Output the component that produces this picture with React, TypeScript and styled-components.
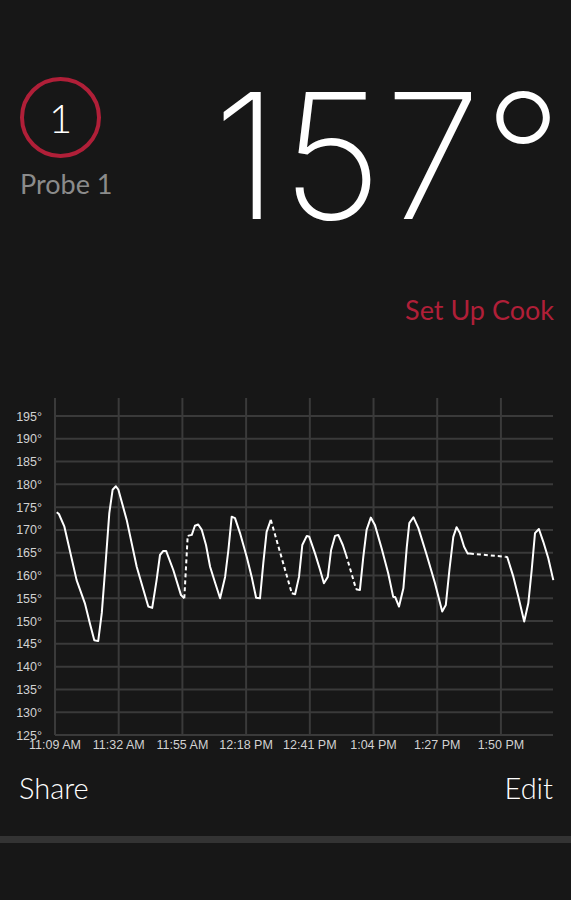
import React from 'react';
import styled, { createGlobalStyle } from 'styled-components';

const GlobalStyle = createGlobalStyle`
    html, body {
        margin: 0;
        padding: 0;
        background: #171717;
    }
`;

const Page = styled.div`
    width: 571px;
    height: 900px;
    background: #171717;
    display: flex;
    flex-direction: column;
    overflow: hidden;
    font-family: Lato, "Noto Sans", sans-serif;
`;

const Header = styled.div`
    display: flex;
    justify-content: space-between;
    align-items: flex-start;
    padding: 69px 6px 0 20px;
`;

const ProbeBlock = styled.div`
    display: flex;
    flex-direction: column;
    align-items: flex-start;
    padding-top: 8px;
`;

const ProbeRing = styled.div`
    box-sizing: border-box;
    width: 81px;
    height: 81px;
    border: 4px solid #b01f38;
    border-radius: 50%;
    display: flex;
    align-items: center;
    justify-content: center;
    color: #fff;
    font-size: 40px;
    font-weight: 300;
    line-height: 1;
`;

const ProbeName = styled.div`
    margin-top: 12px;
    color: #8b8b8b;
    font-size: 27px;
    line-height: 1;
    font-weight: 400;
`;

const BigTemp = styled.div`
    color: #fff;
    font-family: Inter, "Open Sans", sans-serif;
    font-size: 174px;
    font-weight: 200;
    line-height: 1;
    letter-spacing: 2.5px;
`;

const CookLink = styled.div`
    align-self: flex-end;
    margin: 53px 17px 0 0;
    color: #b01f38;
    font-size: 27px;
    line-height: 1;
`;

const ChartWrap = styled.div`
    margin-top: 72px;
    height: 360px;
`;

const Actions = styled.div`
    display: flex;
    justify-content: space-between;
    margin-top: 18px;
    padding: 0 18px 0 19px;
`;

const ActionButton = styled.div`
    color: #fff;
    font-size: 29px;
    font-weight: 300;
    line-height: 1;
`;

const Divider = styled.div`
    margin-top: 34px;
    height: 7px;
    background: #333333;
`;

// chart geometry (svg coords)
const LEFT = 55;
const RIGHT = 553;
const TOP = 3;
const BOTTOM = 340;
const T_MIN = 125;
const T_MAX = 195;
const Y_TOP = 21;
const SPAN_MIN = 179.8;

const xOf = (min: number) => LEFT + (min / SPAN_MIN) * (RIGHT - LEFT);
const yOf = (temp: number) => BOTTOM - ((temp - T_MIN) / (T_MAX - T_MIN)) * (BOTTOM - Y_TOP);

// [minutes since 11:09, temp F] — runs of continuous readings, gaps shown dashed
const runs: number[][][] = [
    [
        [0.6, 173.9], [1.4, 173.5], [3.4, 170.7], [7.8, 159.0], [10.8, 153.9], [12.6, 149.5],
        [14.2, 145.8], [15.6, 145.6], [16.9, 151.8], [18.1, 161.2], [19.6, 173.7], [20.8, 178.8],
        [22.0, 179.6], [22.9, 178.8], [25.9, 172.2], [29.5, 161.9], [33.7, 153.2], [35.1, 152.9],
        [36.7, 159.0], [37.9, 164.5], [39.1, 165.4], [40.1, 165.4], [42.7, 161.2], [45.5, 155.7],
        [46.7, 155.0],
    ],
    [
        [47.9, 168.7], [49.4, 168.9], [50.5, 170.9], [51.7, 171.2], [53.0, 170.0], [54.5, 166.7],
        [56.0, 161.9], [57.8, 158.4], [59.6, 155.0], [61.4, 159.7], [62.6, 165.6], [63.8, 172.9],
        [65.0, 172.6], [66.8, 169.3], [69.2, 164.1], [71.0, 159.7], [72.6, 155.1], [74.0, 155.0],
        [75.2, 162.7], [76.4, 169.6], [77.9, 172.2],
    ],
    [
        [85.5, 156.1], [86.7, 155.9], [88.1, 159.7], [89.3, 166.7], [90.9, 168.7], [91.8, 168.5],
        [93.9, 164.8], [95.7, 161.2], [97.1, 158.3], [98.5, 159.7], [99.7, 165.6], [101.1, 168.7],
        [102.3, 168.9], [103.9, 166.7], [105.1, 164.5],
    ],
    [
        [108.7, 157.0], [110.1, 156.8], [111.3, 164.1], [112.5, 170.0], [114.0, 172.7], [115.5, 171.1],
        [117.9, 166.0], [120.3, 160.5], [122.1, 155.3], [122.8, 155.3], [124.2, 153.2], [125.8, 157.2],
        [127.0, 166.3], [127.9, 171.5], [129.4, 172.8], [131.2, 170.4], [134.2, 164.5], [137.2, 158.3],
        [139.8, 152.1], [141.1, 153.5], [142.4, 161.2], [143.8, 168.5], [145.0, 170.6], [146.2, 169.3],
        [147.7, 166.3], [149.0, 164.8], [149.8, 164.8],
    ],
    [
        [162.7, 164.1], [163.3, 164.0], [165.5, 159.7], [167.3, 155.3], [169.4, 149.9], [170.9, 153.9],
        [172.1, 161.2], [173.3, 169.3], [174.7, 170.2], [176.3, 167.4], [178.1, 163.8], [179.9, 159.0],
    ],
];

const timeLabels = ['11:09 AM', '11:32 AM', '11:55 AM', '12:18 PM', '12:41 PM', '1:04 PM', '1:27 PM', '1:50 PM'];

const toPath = (pts: number[][]) =>
    pts.map((p, i) => `${i === 0 ? 'M' : 'L'}${xOf(p[0]).toFixed(1)},${yOf(p[1]).toFixed(1)}`).join(' ');

const TempChart = () => {
    const temps: number[] = [];
    for (let t = T_MIN; t <= T_MAX; t += 5) temps.push(t);

    return (
        <svg width="571" height="360" viewBox="0 0 571 360">
            {temps.map(t => (
                <g key={t}>
                    <line x1={LEFT} x2={RIGHT} y1={yOf(t)} y2={yOf(t)} stroke="#3a3a3a" strokeWidth="2" />
                    <text
                        x="42"
                        y={yOf(t) + 4.5}
                        textAnchor="end"
                        fill="#d2d2d2"
                        fontSize="12.5"
                        fontFamily='"Liberation Sans", Arial, sans-serif'
                    >
                        {t}°
                    </text>
                </g>
            ))}
            {timeLabels.map((label, i) => {
                const x = xOf(i * 23);
                return (
                    <g key={label}>
                        <line x1={x} x2={x} y1={TOP} y2={BOTTOM} stroke="#3a3a3a" strokeWidth="2" />
                        <text
                            x={x}
                            y="354"
                            textAnchor="middle"
                            fill="#d2d2d2"
                            fontSize="12.5"
                            fontFamily='"Liberation Sans", Arial, sans-serif'
                        >
                            {label}
                        </text>
                    </g>
                );
            })}
            {runs.map((run, i) => (
                <path key={'r' + i} d={toPath(run)} fill="none" stroke="#fff" strokeWidth="2" strokeLinejoin="round" />
            ))}
            {runs.slice(1).map((run, i) => {
                const prev = runs[i][runs[i].length - 1];
                return (
                    <path
                        key={'g' + i}
                        d={toPath([prev, run[0]])}
                        fill="none"
                        stroke="#fff"
                        strokeWidth="2"
                        strokeDasharray="4 3"
                    />
                );
            })}
        </svg>
    );
};

const App = () => {
    return (
        <Page>
            <GlobalStyle />
            <Header>
                <ProbeBlock>
                    <ProbeRing>1</ProbeRing>
                    <ProbeName>Probe 1</ProbeName>
                </ProbeBlock>
                <BigTemp>157°</BigTemp>
            </Header>
            <CookLink>Set Up Cook</CookLink>
            <ChartWrap>
                <TempChart />
            </ChartWrap>
            <Actions>
                <ActionButton>Share</ActionButton>
                <ActionButton>Edit</ActionButton>
            </Actions>
            <Divider />
        </Page>
    );
};

export default App;
